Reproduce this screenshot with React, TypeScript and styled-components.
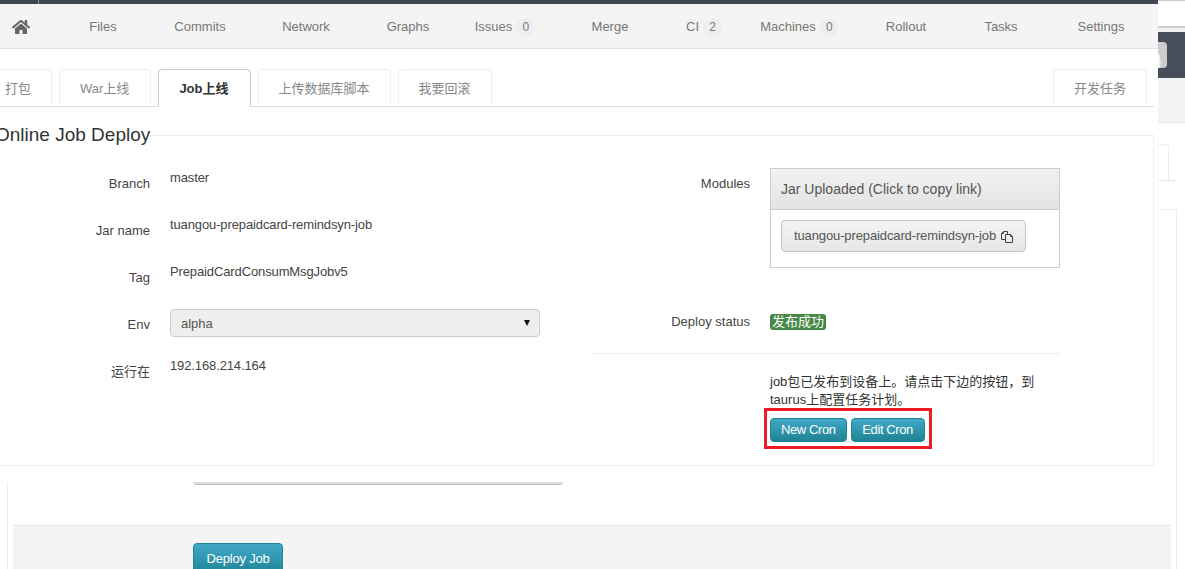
import React from "react"
import styled, { createGlobalStyle } from "styled-components"
import { FaHome } from "react-icons/fa"

const GlobalStyle = createGlobalStyle`
  html, body {
    margin: 0;
    padding: 0;
    background: #fff;
    overflow: hidden;
  }

  body {
    font-family: "Liberation Sans", "Noto Sans CJK SC", sans-serif;
    font-size: 13px;
    line-height: 18px;
    color: #333;
  }
`

const Screen = styled.div`
  position: relative;
  width: 1185px;
  height: 569px;
  overflow: hidden;
`

// The page that sits behind the dialog
const Backdrop = styled.div`
  display: flex;
  flex-direction: column;
`

const BrowserBar = styled.div`
  height: 25px;
  border-top: 1px solid #ccc;
  border-bottom: 2px solid #ccc;
`

const BackdropGap = styled.div`
  height: 4px;
  background: #f2f2f2;
`

const DarkHeader = styled.div`
  height: 46px;
  display: flex;
  justify-content: flex-end;
  align-items: center;
  padding-right: 18px;
  background: #474e59;
`

const Avatar = styled.div`
  width: 34px;
  height: 26px;
  border-radius: 4px;
  background: radial-gradient(ellipse 9px 14px at 19px 20px, #f4f4f4 92%, transparent 100%), #ccc;
`

const SubHeader = styled.div`
  height: 44px;
  background: #f4f4f4;
  border-bottom: 1px solid #e5e5e5;
`

const BackdropTabs = styled.div`
  display: flex;
  justify-content: flex-end;
  height: 36px;
  margin: 21px 8px 0 0;
  border-bottom: 1px solid #e5e5e5;
`

const BackdropTab = styled.div`
  width: 60px;
  margin-right: 8px;
  border: 1px solid #eee;
  border-bottom: 0;
  border-radius: 4px 4px 0 0;
`

const BackdropPanel = styled.div`
  display: flex;
  flex-direction: column;
  margin: 28px 8px 0 7px;
  padding: 0 5px;
  border: 1px solid #eee;
  border-bottom: 0;
`

const Rail = styled.div`
  width: 370px;
  height: 40px;
  margin: 235px 0 40px 180px;
  box-sizing: border-box;
  background: #dcdcdc;
  border-bottom: 1px solid #bdbdbd;
  border-radius: 0 0 4px 4px;
`

const FormActions = styled.div`
  height: 60px;
  padding: 17px 0 0 180px;
  background: #f4f4f4;
  border-top: 1px solid #e5e5e5;
`

// The dialog
const Dialog = styled.div`
  position: absolute;
  top: 0;
  left: -30px;
  width: 1188px;
  padding-bottom: 16px;
  background: #fff;
`

const TopStrip = styled.div`
  height: 4px;
  padding-left: 68px;
  background: #3f4551;
`

const StripTick = styled.div`
  width: 1px;
  height: 4px;
  background: #8b8f97;
`

const Nav = styled.nav`
  display: grid;
  grid-template-columns: 60px 86px 108px 104px 100px 94px 116px 72px 119px 94px 96px 104px;
  height: 42px;
  padding: 2px 0 0 30px;
  background: #f4f4f4;
  border-bottom: 1px solid #e3e3e3;
`

const NavItem = styled.a`
  display: flex;
  align-items: center;
  justify-content: center;
  gap: 4px;
  color: #777;
  font-size: 13px;
`

const HomeLink = styled(NavItem)`
  justify-content: flex-start;
  padding-left: 12px;
  color: #666;
`

const Count = styled.span`
  min-width: 19px;
  height: 19px;
  box-sizing: border-box;
  border-radius: 10px;
  background: #eee;
  color: #777;
  font-size: 12px;
  line-height: 19px;
  text-align: center;
`

const Tabs = styled.div`
  display: flex;
  gap: 7px;
  height: 37px;
  margin: 20px 4px 0 0;
  padding: 0 7px 0 14px;
  border-bottom: 1px solid #ddd;
`

const Tab = styled.a<{ $active?: boolean; $right?: boolean; $extra?: number }>`
  position: relative;
  height: ${p => (p.$active ? 38 : 37)}px;
  box-sizing: border-box;
  margin-left: ${p => (p.$right ? "auto" : "0")};
  padding: 10px ${p => 20 + (p.$extra ?? 0)}px 0 20px;
  border: 1px solid ${p => (p.$active ? "#ccc" : "#eee")};
  border-bottom: 0;
  border-radius: 4px 4px 0 0;
  background: #fff;
  color: ${p => (p.$active ? "#333" : "#888")};
  font-weight: ${p => (p.$active ? "bold" : "normal")};
`

const Fieldset = styled.fieldset`
  min-width: 0;
  margin: 17px 4px 0 20px;
  padding: 0 0 16px;
  border: 1px solid #eee;
`

const Legend = styled.legend`
  margin-left: 4px;
  padding: 0 0 2px;
  font-size: 19px;
  line-height: 21px;
  color: #333;
`

const Columns = styled.div`
  display: grid;
  grid-template-columns: 550px 470px;
  column-gap: 50px;
  margin-left: -1px;
  padding-top: 21px;
`

const Row = styled.div<{ $height?: number }>`
  display: grid;
  grid-template-columns: 160px 1fr;
  column-gap: 20px;
  min-height: ${p => p.$height ?? 47}px;
`

const Label = styled.div`
  padding-top: 7px;
  text-align: right;
  color: #444;
`

const Value = styled.div`
  padding-top: 1px;
  color: #444;
  letter-spacing: -0.12px;
`

const SelectBox = styled.div`
  display: flex;
  align-items: center;
  justify-content: space-between;
  height: 28px;
  box-sizing: border-box;
  padding: 2px 9px 0 10px;
  background: #eee;
  border: 1px solid #ccc;
  border-radius: 4px;
  color: #555;
`

const SelectArrow = styled.span`
  width: 0;
  height: 0;
  margin-bottom: 2px;
  border-left: 3px solid transparent;
  border-right: 3px solid transparent;
  border-top: 6px solid #111;
`

const UploadBox = styled.div`
  height: 100px;
  box-sizing: border-box;
  border: 1px solid #ccc;
`

const UploadHeader = styled.div`
  height: 41px;
  box-sizing: border-box;
  padding: 11px 10px 0;
  background: linear-gradient(#f2f2f2, #e3e3e3);
  border-bottom: 1px solid #ccc;
  color: #555;
  font-size: 14px;
`

const CopyButton = styled.button`
  display: inline-flex;
  align-items: center;
  gap: 4px;
  height: 32px;
  margin: 10px;
  padding: 0 12px;
  background: linear-gradient(#f4f4f4, #e6e6e6);
  border: 1px solid #c4c4c4;
  border-radius: 4px;
  color: #555;
  font: inherit;
  letter-spacing: -0.12px;
`

const StatusRow = styled(Row)`
  margin-top: 38px;
`

const Badge = styled.span`
  display: inline-block;
  margin-top: 8px;
  padding: 0 2px;
  background: #468847;
  border-radius: 3px;
  color: #fff;
  line-height: 16px;
  vertical-align: top;
`

const Rule = styled.hr`
  height: 1px;
  margin: 0;
  border: 0;
  background: #eee;
`

const NoteRow = styled.div`
  margin: 19px 0 0 180px;
  width: 270px;
  color: #333;
`

// Red box drawn round the two buttons
const CronBox = styled.div`
  display: inline-flex;
  gap: 4px;
  margin: -1px 0 0 -6px;
  padding: 7px 4px 4px 3px;
  border: 3px solid #ed1c24;
`

const InfoButton = styled.button`
  min-width: 74px;
  height: 24px;
  padding: 0 10px;
  background: linear-gradient(#42a8c8, #1f8394);
  border: 1px solid #1e8499;
  border-radius: 4px;
  color: #fff;
  font: inherit;
  letter-spacing: -0.4px;
`

const DeployButton = styled(InfoButton)`
  width: 90px;
  height: 32px;
  padding: 0;
  letter-spacing: -0.2px;
`

const CopyIcon = () => (
  <svg width="13" height="13" viewBox="0 0 13 13" fill="none" stroke="#444" strokeWidth="1">
    <path d="M5.5 9.5H1.5V3.5L3.5 1.5H7.5V4" />
    <path d="M3.5 1.5V3.5H1.5" />
    <path d="M5.5 4.5H10.5L12.5 6.5V12.5H5.5Z" />
    <path d="M10.5 4.5V6.5H12.5" />
  </svg>
)

const navLinks: [string, number?][] = [
  ["Files"],
  ["Commits"],
  ["Network"],
  ["Graphs"],
  ["Issues", 0],
  ["Merge"],
  ["CI", 2],
  ["Machines", 0],
  ["Rollout"],
  ["Tasks"],
  ["Settings"],
]

const App = () => (
  <Screen>
    <GlobalStyle />
    <Backdrop>
      <BrowserBar />
      <BackdropGap />
      <DarkHeader>
        <Avatar />
      </DarkHeader>
      <SubHeader />
      <BackdropTabs>
        <BackdropTab />
      </BackdropTabs>
      <BackdropPanel>
        <Rail />
        <FormActions>
          <DeployButton>Deploy Job</DeployButton>
        </FormActions>
      </BackdropPanel>
    </Backdrop>

    <Dialog>
      <TopStrip>
        <StripTick />
      </TopStrip>
      <Nav>
        <HomeLink>
          <FaHome size={18} />
        </HomeLink>
        {navLinks.map(([name, count]) => (
          <NavItem key={name}>
            {name}
            {count !== undefined && <Count>{count}</Count>}
          </NavItem>
        ))}
      </Nav>
      <Tabs>
        <Tab>打包</Tab>
        <Tab $extra={1}>War上线</Tab>
        <Tab $active $extra={1}>Job上线</Tab>
        <Tab>上传数据库脚本</Tab>
        <Tab>我要回滚</Tab>
        <Tab $right>开发任务</Tab>
      </Tabs>
      <Fieldset>
        <Legend>Online Job Deploy</Legend>
        <Columns>
          <div>
            <Row>
              <Label>Branch</Label>
              <Value>master</Value>
            </Row>
            <Row>
              <Label>Jar name</Label>
              <Value>tuangou-prepaidcard-remindsyn-job</Value>
            </Row>
            <Row>
              <Label>Tag</Label>
              <Value>PrepaidCardConsumMsgJobv5</Value>
            </Row>
            <Row>
              <Label>Env</Label>
              <SelectBox>
                alpha
                <SelectArrow />
              </SelectBox>
            </Row>
            <Row>
              <Label>运行在</Label>
              <Value>192.168.214.164</Value>
            </Row>
          </div>
          <div>
            <Row $height={100}>
              <Label>Modules</Label>
              <UploadBox>
                <UploadHeader>Jar Uploaded (Click to copy link)</UploadHeader>
                <CopyButton>
                  tuangou-prepaidcard-remindsyn-job
                  <CopyIcon />
                </CopyButton>
              </UploadBox>
            </Row>
            <StatusRow $height={47}>
              <Label>Deploy status</Label>
              <div>
                <Badge>发布成功</Badge>
              </div>
            </StatusRow>
            <Rule />
            <NoteRow>
              job包已发布到设备上。请点击下边的按钮，到taurus上配置任务计划。
              <CronBox>
                <InfoButton>New Cron</InfoButton>
                <InfoButton>Edit Cron</InfoButton>
              </CronBox>
            </NoteRow>
          </div>
        </Columns>
      </Fieldset>
    </Dialog>
  </Screen>
)

export default App
